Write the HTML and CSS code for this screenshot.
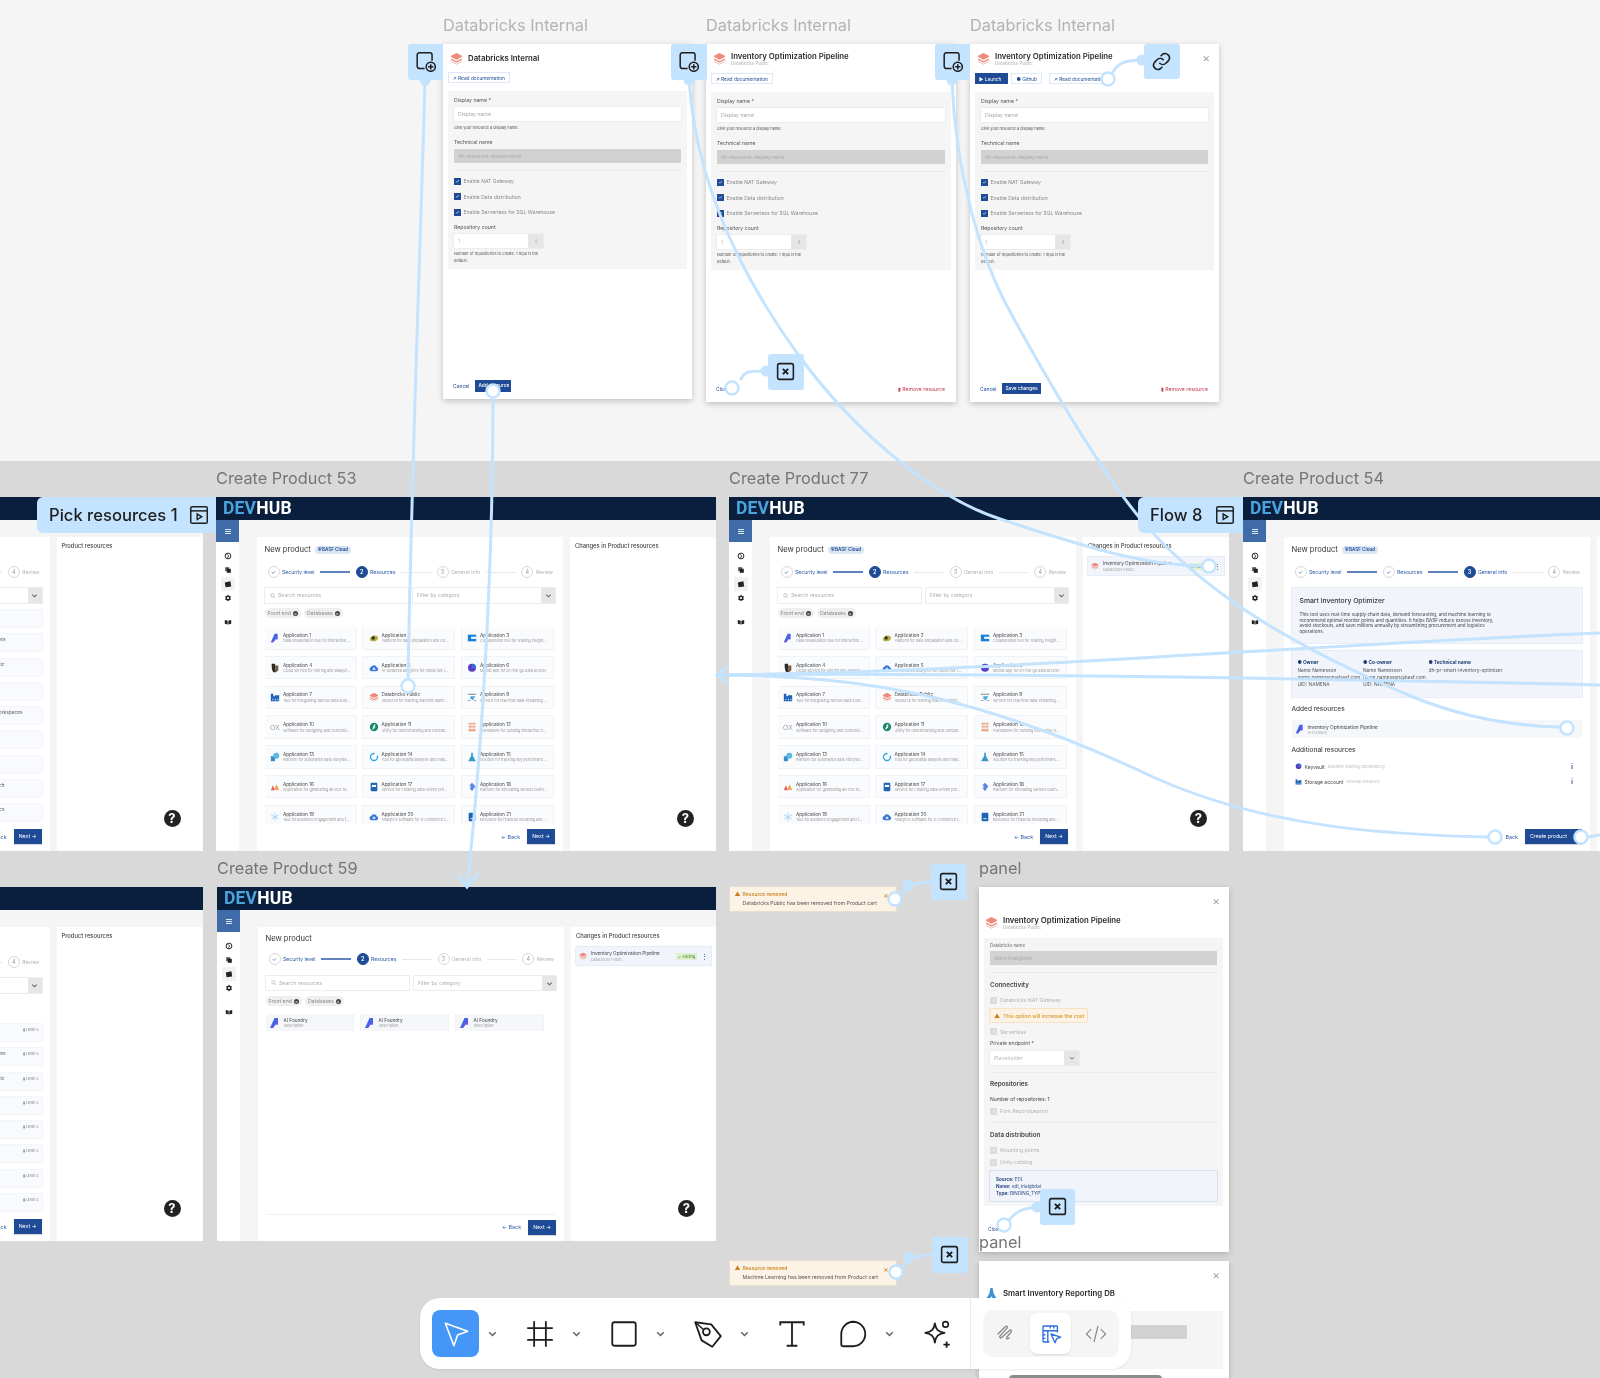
FILE: index.html
```html
<!DOCTYPE html>
<html lang="en">
<head>
<meta charset="utf-8">
<title>Canvas</title>
<link rel="stylesheet" href="styles.css">
</head>
<body>
<svg class="defs" width="0" height="0" aria-hidden="true">
  <defs>
    <symbol id="foundry" viewBox="0 0 12 12"><path d="M1 11 5.500 1H9v6.500H6.500L4 11z" fill="#3f68e6"/><path d="M9 1v6.500H6.500L4 11H1l5-3.500z" fill="#7a4be0" opacity=".8"/></symbol>
    <symbol id="bricks" viewBox="0 0 12 12"><path d="M6 1 11 3.500v1.200L6 7.200 1 4.700V3.500zM1 6l5 2.500L11 6v1.400L6 9.900 1 7.400zM1 8.600l5 2.500 5-2.500v.4L6 11.500 1 9z" fill="#ee8a7c"/></symbol>
    <symbol id="a2" viewBox="0 0 12 12"><path d="M1 8c0-3 3-5 6-5s4 2 4 3-2 4-5 4-5-1-5-2z" fill="#b6b13a"/><circle cx="5" cy="6" r="2" fill="#2f2f2f"/></symbol>
    <symbol id="a3" viewBox="0 0 12 12"><rect x="1" y="2" width="10" height="8" fill="#1a7fd8"/><rect x="5" y="4.500" width="6" height="2.500" fill="#fff"/></symbol>
    <symbol id="a4" viewBox="0 0 12 12"><path d="M2 1h4l1 10H4C2 9 2 5 2 1z" fill="#2d2a26"/><path d="M6 3h4v6l-3 2z" fill="#7a5a3e"/></symbol>
    <symbol id="a5" viewBox="0 0 12 12"><path d="M3 10a2.600 2.600 0 0 1-.4-5.100A3.600 3.600 0 0 1 9.300 5 2.600 2.600 0 0 1 9 10z" fill="#3a78db"/><path d="M4 8.200h4L6 5z" fill="#fff"/></symbol>
    <symbol id="a6" viewBox="0 0 12 12"><circle cx="6" cy="5.600" r="4.800" fill="#5a3fc4"/><path d="M6 1a5 5 0 0 1 5 5H6z" fill="#2f6fd8"/></symbol>
    <symbol id="a7" viewBox="0 0 12 12"><path d="M1 2h3v3h2V4h5v7H1z" fill="#1f63b8"/><path d="M3 8h1v2H3zM6 8h1v2H6zM9 8h1v2H9z" fill="#fff"/></symbol>
    <symbol id="a9" viewBox="0 0 12 12"><path d="M1 2h10v1.400H1zM1 9.500h3v1H1zM8 9.500h3v1H8z" fill="#8a8a8a"/><path d="M4 5h6L7 10 4 8z" fill="#4aa9da"/></symbol>
    <symbol id="a10" viewBox="0 0 12 12"><text x="0" y="9" font-size="8" font-family="Liberation Sans, sans-serif" fill="#9b9b9b">OX</text></symbol>
    <symbol id="a11" viewBox="0 0 12 12"><circle cx="6" cy="6" r="5" fill="#1b8a6b"/><path d="M4 9 6 3h2L6.500 5.500H8L5 9z" fill="#fff"/></symbol>
    <symbol id="a12" viewBox="0 0 12 12"><path d="M2 1h8v2H2zM2 4.500h8v2H2zM2 8h8v3H2z" fill="#ea9a72"/><path d="M4 1.600h4M4 5.200h4M4 9h4" stroke="#fff" stroke-width=".6"/></symbol>
    <symbol id="a13" viewBox="0 0 12 12"><rect x="1" y="5" width="5" height="6" fill="#3a89c9"/><circle cx="7.500" cy="4.500" r="3.600" fill="#5cb8e0"/></symbol>
    <symbol id="a14" viewBox="0 0 12 12"><circle cx="6" cy="6" r="4.200" fill="none" stroke="#2aa6e8" stroke-width="1.600" stroke-dasharray="20 4"/></symbol>
    <symbol id="a15" viewBox="0 0 12 12"><path d="M5 1h2v3.500L10.500 11h-9L5 4.500z" fill="#3898c6"/></symbol>
    <symbol id="a16" viewBox="0 0 12 12"><path d="M1 10 3.500 4 6 10z" fill="#e75a6f"/><path d="M5 9 8 3l3 7z" fill="#f0a03c"/></symbol>
    <symbol id="a17" viewBox="0 0 12 12"><rect x="2" y="1" width="8" height="10" rx="1" fill="#1c66b5"/><rect x="3.500" y="3.500" width="5" height="2.500" fill="#fff"/></symbol>
    <symbol id="a18" viewBox="0 0 12 12"><path d="M6 1 10 5 6 11 3 7 5 6 3 4z" fill="#5a84e6"/></symbol>
    <symbol id="a19" viewBox="0 0 12 12"><path d="M6 1v10M1.500 3.500l9 5M10.500 3.500l-9 5" stroke="#a5d8f2" stroke-width="1.200"/></symbol>
    <symbol id="a21" viewBox="0 0 12 12"><rect x="2" y="1" width="8" height="10" rx="1" fill="#1c66b5"/><path d="M4 8h4" stroke="#fff"/></symbol>
    <symbol id="azure" viewBox="0 0 12 12"><path d="M5 1h2l1 5 3 5H7.500L6 8.500 4.500 11H1l3-5z" fill="#3d93d1"/></symbol>
    <symbol id="side-globe" viewBox="0 0 10 10"><circle cx="5" cy="5" r="3.600" fill="none" stroke="#222" stroke-width="1.200"/><path d="M3 2.500 6 5 4 8" stroke="#222" fill="none"/></symbol>
    <symbol id="side-layers" viewBox="0 0 10 10"><rect x="1.500" y="1.500" width="5" height="5" fill="#555"/><rect x="3.500" y="3.500" width="5" height="5" fill="#222"/></symbol>
    <symbol id="side-box" viewBox="0 0 10 10"><path d="M1 3 8 1.500 9 8 2 9z" fill="#222"/></symbol>
    <symbol id="side-gear" viewBox="0 0 10 10"><circle cx="5" cy="5" r="2.300" fill="none" stroke="#222" stroke-width="1.800"/><path d="M5 1v1.500M5 7.500V9M1.500 3l1.300.8M7.200 6.200 8.500 7M1.500 7l1.300-.8M7.200 3.800 8.500 3" stroke="#222"/></symbol>
    <symbol id="side-book" viewBox="0 0 10 10"><path d="M1 2.500 4.600 3.300V8L1 7.200zM9 2.500 5.400 3.300V8L9 7.200z" fill="#222"/></symbol>
    <symbol id="chev" viewBox="0 0 10 10"><path d="M2.500 4 5 6.500 7.500 4" fill="none" stroke="#666" stroke-width="1.200"/></symbol>
    <symbol id="mag" viewBox="0 0 10 10"><circle cx="4.300" cy="4.300" r="3" fill="none" stroke="#999" stroke-width="1"/><path d="m6.500 6.500 2.500 2.500" stroke="#999" stroke-width="1"/></symbol>
    <symbol id="frame-add" viewBox="0 0 24 24"><path d="M11 20H5a2.500 2.500 0 0 1-2.500-2.500v-13A2.500 2.500 0 0 1 5 2h12a2.500 2.500 0 0 1 2.500 2.500V11" fill="none" stroke="#1e1e1e" stroke-width="1.700"/><circle cx="18" cy="18" r="5.200" fill="none" stroke="#1e1e1e" stroke-width="1.700"/><path d="M18 15v6M15 18h6" stroke="#1e1e1e" stroke-width="1.700"/></symbol>
    <symbol id="box-x" viewBox="0 0 24 24"><rect x="3" y="3" width="18" height="18" rx="2" fill="none" stroke="#1e1e1e" stroke-width="1.800"/><path d="m9 9 6 6m0-6-6 6" stroke="#1e1e1e" stroke-width="2.200"/></symbol>
    <symbol id="flow" viewBox="0 0 24 24"><rect x="3" y="3" width="18" height="18" rx="1.500" fill="none" stroke="#1e1e1e" stroke-width="1.600"/><path d="M3 7.500h18" stroke="#1e1e1e" stroke-width="1.600"/><path d="M10 11v6l5-3z" fill="none" stroke="#1e1e1e" stroke-width="1.500"/></symbol>
  </defs>
</svg>

<div class="canvas">
  <div class="band-top"></div>
  <div class="band-bottom"></div>

  <div class="label label-light l-db1">Databricks Internal</div>
  <div class="label label-light l-db2">Databricks Internal</div>
  <div class="label label-light l-db3">Databricks Internal</div>
  <div class="label l-53">Create Product 53</div>
  <div class="label l-77">Create Product 77</div>
  <div class="label l-54">Create Product 54</div>
  <div class="label l-59">Create Product 59</div>
  <div class="label l-panel1">panel</div>

  <!-- Databricks modals -->
  <section class="modal m1">
    <button class="m-close">×</button>
    <header class="m-head"><svg class="m-logo"><use href="#bricks"/></svg><div><div class="m-title">Databricks Internal</div></div></header>
    <div class="m-actions"><a class="btn-ghost">↗ Read documentation</a></div>
    <div class="m-section">
      <div class="f-label">Display name *</div>
      <div class="input">Display name</div>
      <div class="f-help">Give your resource a display name.</div>
      <div class="f-label mt8">Technical name</div>
      <div class="input disabled">dh-resource-displayname</div>
      <div class="divider"></div>
      <div class="check"><i class="cb">✓</i>Enable NAT Gateway</div>
      <div class="check"><i class="cb">✓</i>Enable Data distribution</div>
      <div class="check"><i class="cb">✓</i>Enable Serverless for SQL Warehouse</div>
      <div class="f-label mt8">Repository count</div>
      <div class="number"><span>1</span><b>⇕</b></div>
      <div class="f-help narrow">Number of repositories to create. 1 repo is the default.</div>
    </div>
    <footer class="m-foot"><a class="link">Cancel</a><a class="btn-primary">Add resource</a></footer>
  </section>

  <section class="modal m2">
    <button class="m-close">×</button>
    <header class="m-head"><svg class="m-logo"><use href="#bricks"/></svg><div><div class="m-title">Inventory Optimization Pipeline</div><div class="m-sub">Databricks Public</div></div></header>
    <div class="m-actions"><a class="btn-ghost">↗ Read documentation</a></div>
    <div class="m-section">
      <div class="f-label">Display name *</div>
      <div class="input">Display name</div>
      <div class="f-help">Give your resource a display name.</div>
      <div class="f-label mt8">Technical name</div>
      <div class="input disabled">dh-resource-displayname</div>
      <div class="divider"></div>
      <div class="check"><i class="cb">✓</i>Enable NAT Gateway</div>
      <div class="check"><i class="cb">✓</i>Enable Data distribution</div>
      <div class="check"><i class="cb">✓</i>Enable Serverless for SQL Warehouse</div>
      <div class="f-label mt8">Repository count</div>
      <div class="number"><span>1</span><b>⇕</b></div>
      <div class="f-help narrow">Number of repositories to create. 1 repo is the default.</div>
    </div>
    <footer class="m-foot"><a class="link">Close</a><a class="remove">▮ Remove resource</a></footer>
  </section>

  <section class="modal m3">
    <button class="m-close">×</button>
    <header class="m-head"><svg class="m-logo"><use href="#bricks"/></svg><div><div class="m-title">Inventory Optimization Pipeline</div><div class="m-sub">Databricks Public</div></div></header>
    <div class="m-actions"><a class="btn-fill">▶ Launch</a><a class="btn-ghost">● Github</a><a class="btn-ghost gap-l">↗ Read documentation</a></div>
    <div class="m-section">
      <div class="f-label">Display name *</div>
      <div class="input">Display name</div>
      <div class="f-help">Give your resource a display name.</div>
      <div class="f-label mt8">Technical name</div>
      <div class="input disabled">dh-resource-displayname</div>
      <div class="divider"></div>
      <div class="check"><i class="cb">✓</i>Enable NAT Gateway</div>
      <div class="check"><i class="cb">✓</i>Enable Data distribution</div>
      <div class="check"><i class="cb">✓</i>Enable Serverless for SQL Warehouse</div>
      <div class="f-label mt8">Repository count</div>
      <div class="number"><span>1</span><b>⇕</b></div>
      <div class="f-help narrow">Number of repositories to create. 1 repo is the default.</div>
    </div>
    <footer class="m-foot"><a class="link">Cancel</a><a class="btn-primary">Save changes</a><a class="remove">▮ Remove resource</a></footer>
  </section>

  <!-- Left clipped frame, row 1 -->
  <section class="product p-left1">
    <div class="topbar"><div class="logo"><span>DEV</span>HUB</div></div>
    <div class="body">
      <nav class="side"><div class="burger"><i></i></div><svg class="si"><use href="#side-globe"/></svg><svg class="si"><use href="#side-layers"/></svg><svg class="si on"><use href="#side-box"/></svg><svg class="si"><use href="#side-gear"/></svg><svg class="si book"><use href="#side-book"/></svg></nav>
      <main class="work">
        <div class="card">
          <div class="c-title">New product</div>
          <div class="stepper"><i class="st done">✓</i><span class="sl on">Security level</span><em class="ln on"></em><i class="st cur">2</i><span class="sl on">Resources</span><em class="ln"></em><i class="st">3</i><span class="sl">General info</span><em class="ln"></em><i class="st">4</i><span class="sl">Review</span></div>
          <div class="filters"><div class="search"><svg><use href="#mag"/></svg>Search resources</div><div class="select">Filter by category<b><svg><use href="#chev"/></svg></b></div></div>
          <div class="rows">
            <div class="row"></div>
            <div class="row r-b">Resources</div>
            <div class="row r-c">Analytic</div>
            <div class="row"></div>
            <div class="row r-a">Workspaces</div>
            <div class="row"></div>
            <div class="row"></div>
            <div class="row r-c">Search</div>
            <div class="row r-c">Analytics</div>
          </div>
          <div class="foot"><a class="back">← Back</a><a class="btn-next">Next →</a></div>
        </div>
        <aside class="changes"><div class="ch-title">Product resources</div><div class="help">?</div></aside>
      </main>
    </div>
  </section>

  <!-- Create Product 53 -->
  <section class="product p-53">
    <div class="topbar"><div class="logo"><span>DEV</span>HUB</div></div>
    <div class="body">
      <nav class="side"><div class="burger"><i></i></div><svg class="si"><use href="#side-globe"/></svg><svg class="si"><use href="#side-layers"/></svg><svg class="si on"><use href="#side-box"/></svg><svg class="si"><use href="#side-gear"/></svg><svg class="si book"><use href="#side-book"/></svg></nav>
      <main class="work">
        <div class="card">
          <div class="c-title">New product <span class="tag">⛨ BASF Cloud</span></div>
          <div class="stepper"><i class="st done">✓</i><span class="sl on">Security level</span><em class="ln on"></em><i class="st cur">2</i><span class="sl on">Resources</span><em class="ln"></em><i class="st">3</i><span class="sl">General info</span><em class="ln"></em><i class="st">4</i><span class="sl">Review</span></div>
          <div class="filters"><div class="search"><svg><use href="#mag"/></svg>Search resources</div><div class="select">Filter by category<b><svg><use href="#chev"/></svg></b></div></div>
          <div class="chips"><span class="chip">Front end <i>×</i></span><span class="chip">Databases <i>×</i></span></div>
          <div class="apps">
            <div class="app"><svg><use href="#foundry"/></svg><div><b>Application 1</b><span>Data visualization tool for interactive data</span></div></div>
            <div class="app"><svg><use href="#a2"/></svg><div><b>Application 2</b><span>Platform for data preparation and cleaning</span></div></div>
            <div class="app"><svg><use href="#a3"/></svg><div><b>Application 3</b><span>Collaboration tool for sharing insights in teams</span></div></div>
            <div class="app"><svg><use href="#a4"/></svg><div><b>Application 4</b><span>Cloud service for storing and analyzing data</span></div></div>
            <div class="app"><svg><use href="#a5"/></svg><div><b>Application 5</b><span>AI-powered analytics for predictive insights</span></div></div>
            <div class="app"><svg><use href="#a6"/></svg><div><b>Application 6</b><span>Mobile app for on-the-go data access</span></div></div>
            <div class="app"><svg><use href="#a7"/></svg><div><b>Application 7</b><span>Tool for integrating various data sources now</span></div></div>
            <div class="app"><svg><use href="#bricks"/></svg><div><b>Databricks Public</b><span>Resource for training machine learning models</span></div></div>
            <div class="app"><svg><use href="#a9"/></svg><div><b>Application 9</b><span>Service for real-time data streaming and more</span></div></div>
            <div class="app"><svg><use href="#a10"/></svg><div><b>Application 10</b><span>Software for designing and customizing things</span></div></div>
            <div class="app"><svg><use href="#a11"/></svg><div><b>Application 11</b><span>Utility for benchmarking and comparing data</span></div></div>
            <div class="app"><svg><use href="#a12"/></svg><div><b>Application 12</b><span>Framework for building interactive data apps</span></div></div>
            <div class="app"><svg><use href="#a13"/></svg><div><b>Application 13</b><span>Platform for automated data storytelling</span></div></div>
            <div class="app"><svg><use href="#a14"/></svg><div><b>Application 14</b><span>Tool for geospatial analysis and mapping data</span></div></div>
            <div class="app"><svg><use href="#a15"/></svg><div><b>Application 15</b><span>Solution for tracking key performance indicators</span></div></div>
            <div class="app"><svg><use href="#a16"/></svg><div><b>Application 16</b><span>Application for generating ad-hoc reports now</span></div></div>
            <div class="app"><svg><use href="#a17"/></svg><div><b>Application 17</b><span>Service for creating data-driven presentations</span></div></div>
            <div class="app"><svg><use href="#a18"/></svg><div><b>Application 18</b><span>Platform for simulating various business cases</span></div></div>
            <div class="app"><svg><use href="#a19"/></svg><div><b>Application 19</b><span>Tool for audience engagement and feedback now</span></div></div>
            <div class="app"><svg><use href="#a5"/></svg><div><b>Application 20</b><span>Analytics software for e-commerce trends today</span></div></div>
            <div class="app"><svg><use href="#a21"/></svg><div><b>Application 21</b><span>Resource for financial modeling and forecasting</span></div></div>
          </div>
          <div class="foot"><a class="back">← Back</a><a class="btn-next">Next →</a></div>
        </div>
        <aside class="changes"><div class="ch-title">Changes in Product resources</div><div class="help">?</div></aside>
      </main>
    </div>
  </section>

  <!-- Create Product 77 -->
  <section class="product p-77">
    <div class="topbar"><div class="logo"><span>DEV</span>HUB</div></div>
    <div class="body">
      <nav class="side"><div class="burger"><i></i></div><svg class="si"><use href="#side-globe"/></svg><svg class="si"><use href="#side-layers"/></svg><svg class="si on"><use href="#side-box"/></svg><svg class="si"><use href="#side-gear"/></svg><svg class="si book"><use href="#side-book"/></svg></nav>
      <main class="work">
        <div class="card">
          <div class="c-title">New product <span class="tag">⛨ BASF Cloud</span></div>
          <div class="stepper"><i class="st done">✓</i><span class="sl on">Security level</span><em class="ln on"></em><i class="st cur">2</i><span class="sl on">Resources</span><em class="ln"></em><i class="st">3</i><span class="sl">General info</span><em class="ln"></em><i class="st">4</i><span class="sl">Review</span></div>
          <div class="filters"><div class="search"><svg><use href="#mag"/></svg>Search resources</div><div class="select">Filter by category<b><svg><use href="#chev"/></svg></b></div></div>
          <div class="chips"><span class="chip">Front end <i>×</i></span><span class="chip">Databases <i>×</i></span></div>
          <div class="apps">
            <div class="app"><svg><use href="#foundry"/></svg><div><b>Application 1</b><span>Data visualization tool for interactive data</span></div></div>
            <div class="app"><svg><use href="#a2"/></svg><div><b>Application 2</b><span>Platform for data preparation and cleaning</span></div></div>
            <div class="app"><svg><use href="#a3"/></svg><div><b>Application 3</b><span>Collaboration tool for sharing insights in teams</span></div></div>
            <div class="app"><svg><use href="#a4"/></svg><div><b>Application 4</b><span>Cloud service for storing and analyzing data</span></div></div>
            <div class="app"><svg><use href="#a5"/></svg><div><b>Application 5</b><span>AI-powered analytics for predictive insights</span></div></div>
            <div class="app"><svg><use href="#a6"/></svg><div><b>Application 6</b><span>Mobile app for on-the-go data access</span></div></div>
            <div class="app"><svg><use href="#a7"/></svg><div><b>Application 7</b><span>Tool for integrating various data sources now</span></div></div>
            <div class="app"><svg><use href="#bricks"/></svg><div><b>Databricks Public</b><span>Resource for training machine learning models</span></div></div>
            <div class="app"><svg><use href="#a9"/></svg><div><b>Application 9</b><span>Service for real-time data streaming and more</span></div></div>
            <div class="app"><svg><use href="#a10"/></svg><div><b>Application 10</b><span>Software for designing and customizing things</span></div></div>
            <div class="app"><svg><use href="#a11"/></svg><div><b>Application 11</b><span>Utility for benchmarking and comparing data</span></div></div>
            <div class="app"><svg><use href="#a12"/></svg><div><b>Application 12</b><span>Framework for building interactive data apps</span></div></div>
            <div class="app"><svg><use href="#a13"/></svg><div><b>Application 13</b><span>Platform for automated data storytelling</span></div></div>
            <div class="app"><svg><use href="#a14"/></svg><div><b>Application 14</b><span>Tool for geospatial analysis and mapping data</span></div></div>
            <div class="app"><svg><use href="#a15"/></svg><div><b>Application 15</b><span>Solution for tracking key performance indicators</span></div></div>
            <div class="app"><svg><use href="#a16"/></svg><div><b>Application 16</b><span>Application for generating ad-hoc reports now</span></div></div>
            <div class="app"><svg><use href="#a17"/></svg><div><b>Application 17</b><span>Service for creating data-driven presentations</span></div></div>
            <div class="app"><svg><use href="#a18"/></svg><div><b>Application 18</b><span>Platform for simulating various business cases</span></div></div>
            <div class="app"><svg><use href="#a19"/></svg><div><b>Application 19</b><span>Tool for audience engagement and feedback now</span></div></div>
            <div class="app"><svg><use href="#a5"/></svg><div><b>Application 20</b><span>Analytics software for e-commerce trends today</span></div></div>
            <div class="app"><svg><use href="#a21"/></svg><div><b>Application 21</b><span>Resource for financial modeling and forecasting</span></div></div>
          </div>
          <div class="foot"><a class="back">← Back</a><a class="btn-next">Next →</a></div>
        </div>
        <aside class="changes"><div class="ch-title">Changes in Product resources</div>
          <div class="ch-item"><svg><use href="#bricks"/></svg><div><b>Inventory Optimization Pipeline</b><span>Databricks Public</span></div><em class="adding">✓ Adding</em><i class="kebab">⋮</i></div>
          <div class="help">?</div></aside>
      </main>
    </div>
  </section>

  <!-- Create Product 54 -->
  <section class="product p-54">
    <div class="topbar"><div class="logo"><span>DEV</span>HUB</div></div>
    <div class="body">
      <nav class="side"><div class="burger"><i></i></div><svg class="si"><use href="#side-globe"/></svg><svg class="si"><use href="#side-layers"/></svg><svg class="si on"><use href="#side-box"/></svg><svg class="si"><use href="#side-gear"/></svg><svg class="si book"><use href="#side-book"/></svg></nav>
      <main class="work">
        <div class="card">
          <div class="c-title">New product <span class="tag">⛨ BASF Cloud</span></div>
          <div class="stepper"><i class="st done">✓</i><span class="sl on">Security level</span><em class="ln on"></em><i class="st done">✓</i><span class="sl on">Resources</span><em class="ln on"></em><i class="st cur">3</i><span class="sl on">General info</span><em class="ln"></em><i class="st">4</i><span class="sl">Review</span></div>
          <div class="summary">
            <h3>Smart Inventory Optimizer</h3>
            <p>This tool uses real-time supply chain data, demand forecasting, and machine learning to recommend optimal reorder points and quantities. It helps BASF reduce excess inventory, avoid stockouts, and save millions annually by streamlining procurement and logistics operations.</p>
          </div>
          <div class="owners">
            <div class="col"><b>Owner</b><span>Name Namesson</span><span>name.namesson@basf.com</span><span>UID: NAMENA</span></div>
            <div class="col"><b>Co-owner</b><span>Name Namesson</span><span>name.namesson@basf.com</span><span>UID: NAMENA</span></div>
            <div class="col"><b>Technical name</b><span>dh-pr-smart-inventory-optimizer</span></div>
          </div>
          <div class="sec-title">Added resources</div>
          <div class="added"><svg><use href="#foundry"/></svg><div><b>Inventory Optimization Pipeline</b><span>AI Foundry</span></div></div>
          <div class="sec-title second">Additional resources</div>
          <div class="extra"><svg><use href="#a6"/></svg><b>Keyvault</b><span>Machine learning dependency</span><i>i</i></div>
          <div class="extra"><svg><use href="#a7"/></svg><b>Storage account</b><span>DevHub resource</span><i>i</i></div>
          <div class="foot"><a class="back">Back</a><a class="btn-next">Create product</a></div>
        </div>
        <aside class="changes"></aside>
      </main>
    </div>
  </section>

  <!-- Left clipped frame, row 2 -->
  <section class="product p-left2">
    <div class="topbar"><div class="logo"><span>DEV</span>HUB</div></div>
    <div class="body">
      <nav class="side"><div class="burger"><i></i></div></nav>
      <main class="work">
        <div class="card">
          <div class="c-title">New product</div>
          <div class="stepper"><i class="st done">✓</i><span class="sl on">Security level</span><em class="ln on"></em><i class="st cur">2</i><span class="sl on">Resources</span><em class="ln"></em><i class="st">3</i><span class="sl">General info</span><em class="ln"></em><i class="st">4</i><span class="sl">Review</span></div>
          <div class="filters"><div class="search"><svg><use href="#mag"/></svg>Search resources</div><div class="select">Filter by category<b><svg><use href="#chev"/></svg></b></div></div>
          <div class="rows shifted">
            <div class="row"><em>▮ Level 5</em></div>
            <div class="row r-b">Resources<em>▮ Level 5</em></div>
            <div class="row r-c">Analytic<em>▮ Level 5</em></div>
            <div class="row"><em>▮ Level 5</em></div>
            <div class="row"><em>▮ Level 5</em></div>
            <div class="row"><em>▮ Level 5</em></div>
            <div class="row"><em>▮ Level 5</em></div>
            <div class="row"><em>▮ Level 5</em></div>
          </div>
          <div class="foot"><a class="back">← Back</a><a class="btn-next">Next →</a></div>
        </div>
        <aside class="changes"><div class="ch-title">Product resources</div><div class="help">?</div></aside>
      </main>
    </div>
  </section>

  <!-- Create Product 59 -->
  <section class="product p-59 compact">
    <div class="topbar"><div class="logo"><span>DEV</span>HUB</div></div>
    <div class="body">
      <nav class="side"><div class="burger"><i></i></div><svg class="si"><use href="#side-globe"/></svg><svg class="si"><use href="#side-layers"/></svg><svg class="si on"><use href="#side-box"/></svg><svg class="si"><use href="#side-gear"/></svg><svg class="si book"><use href="#side-book"/></svg></nav>
      <main class="work">
        <div class="card">
          <div class="c-title">New product</div>
          <div class="stepper"><i class="st done">✓</i><span class="sl on">Security level</span><em class="ln on"></em><i class="st cur">2</i><span class="sl on">Resources</span><em class="ln"></em><i class="st">3</i><span class="sl">General info</span><em class="ln"></em><i class="st">4</i><span class="sl">Review</span></div>
          <div class="filters"><div class="search"><svg><use href="#mag"/></svg>Search resources</div><div class="select">Filter by category<b><svg><use href="#chev"/></svg></b></div></div>
          <div class="chips"><span class="chip">Front end <i>×</i></span><span class="chip">Databases <i>×</i></span></div>
          <div class="apps three">
            <div class="app"><svg><use href="#foundry"/></svg><div><b>AI Foundry</b><span>Description</span></div></div>
            <div class="app"><svg><use href="#foundry"/></svg><div><b>AI Foundry</b><span>Description</span></div></div>
            <div class="app"><svg><use href="#foundry"/></svg><div><b>AI Foundry</b><span>Description</span></div></div>
          </div>
          <div class="foot lined"><a class="back">← Back</a><a class="btn-next">Next →</a></div>
        </div>
        <aside class="changes"><div class="ch-title">Changes in Product resources</div>
          <div class="ch-item"><svg><use href="#bricks"/></svg><div><b>Inventory Optimization Pipeline</b><span>Databricks Public</span></div><em class="adding">✓ Adding</em><i class="kebab">⋮</i></div>
          <div class="help">?</div></aside>
      </main>
    </div>
  </section>

  <!-- Toasts -->
  <div class="toast t1"><i class="warn">▲</i><div><b>Resource removed</b><span>Databricks Public has been removed from Product cart</span></div><u>×</u></div>
  <div class="toast t2"><i class="warn">▲</i><div><b>Resource removed</b><span>Machine Learning has been removed from Product cart</span></div><u>×</u></div>

  <!-- Side panels -->
  <section class="panel pn1">
    <button class="m-close">×</button>
    <header class="pn-head"><svg class="m-logo"><use href="#bricks"/></svg><div><div class="m-title">Inventory Optimization Pipeline</div><div class="m-sub">Databricks Public</div></div></header>
    <div class="pn-section">
      <div class="tiny">Databricks name</div>
      <div class="input disabled">dbks-trialgbdat</div>
      <div class="divider"></div>
      <div class="h6">Connectivity</div>
      <div class="gcheck"><i>✓</i>Databricks NAT Gateway</div>
      <div class="warnbox"><i class="warn">▲</i>This option will increase the cost</div>
      <div class="gcheck tight"><i>✓</i>Serverless</div>
      <div class="f-label mt4">Private endpoint *</div>
      <div class="number sel"><span>Placeholder</span><b><svg><use href="#chev"/></svg></b></div>
      <div class="divider"></div>
      <div class="h6">Repositories</div>
      <div class="tiny strong">Number of repositories: 1</div>
      <div class="gcheck tight"><i>✓</i>Fork Repo blueprint</div>
      <div class="divider"></div>
      <div class="h6">Data distribution</div>
      <div class="gcheck"><i>✓</i>Mounting points</div>
      <div class="gcheck close"><i>✓</i>Unity catalog</div>
      <div class="infobox"><div><b>Source:</b> EDL</div><div><b>Name:</b> edl_trialgbdat</div><div><b>Type:</b> BINDING_TYPE</div></div>
    </div>
    <footer class="pn-foot"><a class="link">Close</a></footer>
  </section>

  <section class="panel pn2">
    <button class="m-close">×</button>
    <header class="pn-head"><svg class="m-logo"><use href="#azure"/></svg><div><div class="m-title">Smart Inventory Reporting DB</div></div></header>
    <div class="pn-section short">
      <div class="tiny">Databricks name</div>
      <div class="input disabled shortinput">dbks-trialgbdat</div>
    </div>
    <div class="scrollbar"></div>
  </section>
  <div class="label l-panel2">panel</div>

  <!-- Prototype connectors -->
  <svg class="wires" viewBox="0 0 1600 1378" width="1600" height="1378" aria-hidden="true">
    <g fill="none" stroke="#c4e3fe" stroke-width="3" stroke-linecap="round">
      <path d="M425 80C422 200 412 450 408 680"/>
      <path d="M493 398C493 600 478 790 467 886M458 875 467 887 477 875"/>
      <path d="M689 80C695 170 730 260 797 353C860 440 940 500 1003 520C1080 545 1140 565 1203 566"/>
      <path d="M952 80C955 170 980 260 1013 317C1045 375 1105 480 1150 530C1210 595 1290 645 1413 697C1460 716 1510 726 1560 727"/>
      <path d="M717 675C900 672 1300 678 1600 685"/>
      <path d="M717 675C1000 672 1300 645 1600 633"/>
      <path d="M717 675C860 675 980 695 1153 777C1270 830 1400 835 1488 837"/>
      <path d="M1588 837 1600 835"/>
      <path d="M727 667 717 675 727 683"/>
      <path d="M768 371C745 371 745 372 741 379"/>
      <path d="M1144 60C1125 60 1118 63 1113 72"/>
      <path d="M931 882C915 882 912 885 902 893"/>
      <path d="M932 1255C916 1255 913 1258 903 1266"/>
      <path d="M1039 1207C1022 1208 1016 1212 1010 1219"/>
    </g>
    <g fill="#c4e3fe">
      <circle cx="425" cy="80" r="5.500"/><circle cx="689" cy="80" r="5.500"/><circle cx="952" cy="80" r="5.500"/>
      <circle cx="1142" cy="60" r="5.500"/><circle cx="766" cy="371" r="5.500"/>
      <circle cx="908" cy="885" r="5.500"/><circle cx="909" cy="1257" r="5.500"/><circle cx="1037" cy="1207" r="5.500"/>
    </g>
    <g fill="#fff" stroke="#c4e3fe" stroke-width="2.500">
      <circle cx="408" cy="686" r="6.500"/><circle cx="493" cy="391" r="6.500"/><circle cx="732" cy="388" r="6.500"/>
      <circle cx="1108" cy="79" r="6.500"/><circle cx="1209" cy="566" r="6.500"/><circle cx="1567" cy="728" r="6.500"/>
      <circle cx="1495" cy="837" r="6.500"/><circle cx="1581" cy="837" r="6.500"/>
      <circle cx="895" cy="899" r="6.500"/><circle cx="896" cy="1272" r="6.500"/><circle cx="1004" cy="1225" r="6.500"/>
    </g>
  </svg>

  <!-- Connector handles -->
  <div class="node n-a"><svg><use href="#frame-add"/></svg></div>
  <div class="node n-b"><svg><use href="#frame-add"/></svg></div>
  <div class="node n-c"><svg><use href="#frame-add"/></svg></div>
  <div class="node n-link"><svg viewBox="0 0 24 24"><path d="M10 14a5 5 0 0 0 7 0l3-3a5 5 0 0 0-7-7l-1.500 1.500M14 10a5 5 0 0 0-7 0l-3 3a5 5 0 0 0 7 7l1.500-1.500" fill="none" stroke="#1e1e1e" stroke-width="1.800" stroke-linecap="round"/></svg></div>
  <div class="node n-x1"><svg><use href="#box-x"/></svg></div>
  <div class="node n-x2"><svg><use href="#box-x"/></svg></div>
  <div class="node n-x3"><svg><use href="#box-x"/></svg></div>
  <div class="node n-x4"><svg><use href="#box-x"/></svg></div>
  <div class="flowtag f-pick">Pick resources 1<svg><use href="#flow"/></svg></div>
  <div class="flowtag f-8">Flow 8<svg><use href="#flow"/></svg></div>

  <!-- Toolbar -->
  <div class="toolbar">
    <div class="tools">
      <button class="tool move"><svg viewBox="0 0 30 30"><path d="M5 5 26 12.500 16.500 16 13 26z" fill="none" stroke="#fff" stroke-width="1.500" stroke-linejoin="round"/></svg></button>
      <svg class="mini"><use href="#chev"/></svg>
      <button class="tool"><svg viewBox="0 0 30 30"><path d="M9.500 3v24M20.500 3v24M3 9.500h24M3 20.500h24" stroke="#1e1e1e" stroke-width="1.700"/></svg></button>
      <svg class="mini"><use href="#chev"/></svg>
      <button class="tool"><svg viewBox="0 0 30 30"><rect x="4" y="4" width="22" height="22" rx="2" fill="none" stroke="#1e1e1e" stroke-width="1.700"/></svg></button>
      <svg class="mini"><use href="#chev"/></svg>
      <button class="tool"><svg viewBox="0 0 30 30"><path d="M3 4 18 6 27 17 19 27 9 21z" fill="none" stroke="#1e1e1e" stroke-width="1.700" stroke-linejoin="round"/><circle cx="13.500" cy="13" r="3.200" fill="none" stroke="#1e1e1e" stroke-width="1.700"/><path d="m3 4 8 7" stroke="#1e1e1e" stroke-width="1.500"/></svg></button>
      <svg class="mini"><use href="#chev"/></svg>
      <button class="tool"><svg viewBox="0 0 30 30"><path d="M4 7V4h22v3M15 4v22M10 26h10" fill="none" stroke="#1e1e1e" stroke-width="1.700"/></svg></button>
      <button class="tool"><svg viewBox="0 0 30 30"><path d="M15 3.500a11.500 11.500 0 0 1 0 23H6a2 2 0 0 1-2-2V15A11.500 11.500 0 0 1 15 3.500z" fill="none" stroke="#1e1e1e" stroke-width="1.700"/></svg></button>
      <svg class="mini"><use href="#chev"/></svg>
      <button class="tool"><svg viewBox="0 0 30 30"><path d="M13 5c1 6 3 8 9 9-6 1-8 3-9 9-1-6-3-8-9-9 6-1 8-3 9-9z" fill="none" stroke="#1e1e1e" stroke-width="1.700" stroke-linejoin="round"/><circle cx="23" cy="6" r="2.600" fill="none" stroke="#1e1e1e" stroke-width="1.500"/><path d="M24 22v6M21 25h6" stroke="#1e1e1e" stroke-width="1.700"/></svg></button>
    </div>
    <div class="modes">
      <button class="mode"><svg viewBox="0 0 30 30"><path d="M5 15 14 6c2-2 4 0 2 2l-8 9c-2 2 0 4 2 2l9-8c2-2 4 0 2 2l-5 6c-1 2 1 3 3 1" fill="none" stroke="#8a8a8a" stroke-width="1.700" stroke-linecap="round"/></svg></button>
      <button class="mode active"><svg viewBox="0 0 30 30"><path d="M13 25H6a1 1 0 0 1-1-1V6a1 1 0 0 1 1-1h16a1 1 0 0 1 1 1v7M5 11h18M11 11v14M14 5v3M18.500 5v3M5 16h3M5 20.500h3" fill="none" stroke="#2f6fdf" stroke-width="1.700"/><path d="M15 15 27 19 22 21 20 26z" fill="none" stroke="#2f6fdf" stroke-width="1.700" stroke-linejoin="round"/></svg></button>
      <button class="mode"><svg viewBox="0 0 30 30"><path d="M9 9 3 15l6 6M21 9l6 6-6 6M17.500 5l-5 20" fill="none" stroke="#8a8a8a" stroke-width="1.500"/></svg></button>
    </div>
  </div>
</div>
</body>
</html>
```

FILE: styles.css
```css
* { box-sizing: border-box; }
html, body { margin: 0; width: 1600px; height: 1378px; overflow: hidden; }
body { font-family: Inter, "Liberation Sans", sans-serif; color: #333; background: #d9d9d9; }
button { border: 0; background: none; padding: 0; font: inherit; }
.defs { position: absolute; }

.canvas { position: relative; width: 1600px; height: 1378px; overflow: hidden; display: flex; flex-direction: column; filter: blur(.35px); }
.band-top { height: 461px; background: #f5f5f5; flex: none; }
.band-bottom { flex: 1; background: #d9d9d9; }

/* Frame labels: free canvas */
.label { position: absolute; font-size: 16.300px; line-height: 20px; color: #757575; white-space: nowrap; }
.label-light { color: #b3b3b3; }
.l-db1 { left: 443px; top: 15px; }
.l-db2 { left: 706px; top: 15px; }
.l-db3 { left: 970px; top: 15px; }
.l-53 { left: 216px; top: 468px; }
.l-77 { left: 729px; top: 468px; }
.l-54 { left: 1243px; top: 468px; }
.l-59 { left: 217px; top: 858px; }
.l-panel1 { left: 979px; top: 858px; }
.l-panel2 { left: 979px; top: 1232px; }

/* Modals */
.modal { position: absolute; top: 44px; width: 249px; background: #fff; box-shadow: 0 2px 6px rgba(0,0,0,.22); display: flex; flex-direction: column; padding: 0 5px; }
.m1 { left: 443px; height: 355px; }
.m2 { left: 706px; height: 358px; width: 250px; }
.m3 { left: 970px; height: 358px; }
.m-close { position: absolute; right: 9px; top: 7px; font-size: 12px; line-height: 14px; color: #8a8a8a; font-weight: 300; }
.m-head { height: 28px; display: flex; align-items: center; gap: 5px; padding-left: 2px; }
.m2 .m-head, .m3 .m-head { height: 29px; }
.m-logo { width: 13px; height: 13px; flex: none; }
.m-title { font-size: 7.800px; line-height: 10px; font-weight: 600; color: #2b2b2b; white-space: nowrap; }
.m-sub { font-size: 4.600px; line-height: 6px; color: #b0b0b0; white-space: nowrap; }
.m-actions { height: 11px; display: flex; gap: 3px; }
.btn-ghost { display: flex; align-items: center; padding: 0 4px; background: #fff; border: 1px solid #dfe8f4; font-size: 4.800px; color: #1f4b99; white-space: nowrap; }
.btn-fill { display: flex; align-items: center; padding: 0 7px 0 4px; background: #1e4a96; font-size: 4.800px; color: #fff; white-space: nowrap; }
.gap-l { margin-left: 4px; }
.m-section { margin-top: 8px; background: #f5f5f5; padding: 6px 6px 5px; height: 178px; }
.f-label { font-size: 5.200px; line-height: 7px; color: #555; white-space: nowrap; }
.mt8 { margin-top: 8px; }
.mt4 { margin-top: 4.500px; }
.input { margin-top: 3px; height: 14px; background: #fff; box-shadow: 0 0 0 .5px #e4e4e4; font-size: 5.200px; line-height: 14px; padding-left: 4px; color: #a8a8a8; white-space: nowrap; }
.input.disabled { background: #d2d2d2; box-shadow: none; color: #ababab; }
.f-help { margin-top: 2.500px; font-size: 3.900px; line-height: 7px; color: #555; }
.f-help.narrow { width: 92px; }
.divider { height: 1px; background: #ebebeb; margin-top: 7.500px; }
.check { display: flex; align-items: center; gap: 2.500px; height: 8px; margin-top: 7.500px; font-size: 5.100px; color: #8a8a8a; white-space: nowrap; }
.divider + .check { margin-top: 6px; }
.cb { width: 7px; height: 7px; background: #1e4a96; color: #fff; font-style: normal; font-size: 5px; line-height: 7px; text-align: center; flex: none; }
.number { margin-top: 2.500px; width: 89px; height: 14px; display: flex; background: #fff; font-size: 5.200px; line-height: 14px; color: #bbb; box-shadow: 0 0 0 .5px #e4e4e4; }
.number span { flex: 1; padding-left: 4px; }
.number b { width: 15px; background: #e6e6e6; text-align: center; font-weight: 400; color: #aaa; }
.m-foot { margin-top: auto; padding: 0 6px 7px 5px; display: flex; align-items: center; gap: 6px; height: 19px; font-size: 5px; }
.m3 .m-foot, .m2 .m-foot { padding-bottom: 8px; }
.link { color: #1f4b99; font-size: 5px; }
.btn-primary { background: #1e4a96; color: #fff; padding: 0 3px; height: 11.500px; line-height: 11.500px; font-size: 4.800px; font-weight: 500; white-space: nowrap; }
.m1 .btn-primary { width: 36px; text-align: center; }
.remove { margin-left: auto; color: #c23a4e; font-size: 5.200px; white-space: nowrap; }

/* Product frames */
.product { position: absolute; width: 500px; height: 354px; background: #f5f5f5; overflow: hidden; display: flex; flex-direction: column; }
.p-left1 { left: -297.500px; top: 497px; }
.p-53 { left: 216px; top: 497px; }
.p-77 { left: 729px; top: 497px; }
.p-54 { left: 1243px; top: 497px; }
.p-left2 { left: -297.500px; top: 887px; }
.p-59 { left: 217px; top: 887px; width: 499px; }
.topbar { height: 23px; flex: none; background: #0a1f3e; padding-left: 7px; }
.logo { font-family: Roboto, "Liberation Sans", sans-serif; font-weight: 700; font-size: 17.500px; line-height: 23px; color: #fff; letter-spacing: .2px; }
.logo span { color: #4aa3dc; }
.body { flex: 1; display: flex; min-height: 0; }
.side { width: 23px; flex: none; background: #fff; display: flex; flex-direction: column; align-items: center; }
.burger { width: 23px; height: 22px; background: #3f6ba9; display: flex; align-items: center; justify-content: center; flex: none; margin-bottom: 10px; }
.burger i { width: 6px; height: 5px; background: repeating-linear-gradient(#dfe8f4 0 1px, transparent 1px 2px); }
.si { width: 8px; height: 8px; margin-bottom: 6px; flex: none; }
.si.on { outline: 3px solid #f2f2f2; background: #f2f2f2; }
.si.book { margin-top: 10px; }
.work { flex: 1; display: flex; padding: 17px 0 0 18px; gap: 7px; min-width: 0; }
.card { width: 306px; flex: none; background: #fff; padding: 8px 8px 7px 7.500px; display: flex; flex-direction: column; overflow: hidden; }
.c-title { font-size: 7.600px; line-height: 10px; color: #333; display: flex; align-items: center; gap: 4px; white-space: nowrap; }
.tag { font-size: 4.600px; height: 8px; line-height: 8px; padding: 0 3px; border-radius: 4px; background: #dbe6f3; color: #1f4b99; font-weight: 600; }
.stepper { display: flex; align-items: center; gap: 2.500px; height: 12px; margin-top: 11px; padding-left: 3px; margin-right: 2px; }
.st { width: 12px; height: 12px; border-radius: 50%; border: .8px solid #d8d8d8; font-style: normal; font-size: 5.500px; line-height: 10.500px; text-align: center; color: #999; flex: none; background: #fff; }
.st.done { color: #1e4a96; }
.st.cur { background: #1e4a96; border-color: #1e4a96; color: #fff; font-weight: 600; }
.sl { font-size: 5.100px; color: #b5b5b5; white-space: nowrap; }
.sl.on { color: #2a5aa8; }
.ln { flex: 1; height: 1px; background: #e8e8e8; margin: 0 3px; }
.ln.on { background: #5f83be; height: 1.200px; }
.filters { display: flex; gap: 5px; margin-top: 10px; height: 15px; padding-right: 0; }
.search, .select { flex: 1; background: #fff; box-shadow: 0 0 0 .7px #e6e6e6; font-size: 5.200px; line-height: 15px; padding-left: 4px; color: #b0b0b0; white-space: nowrap; position: relative; }
.search { display: flex; align-items: center; gap: 3px; padding-left: 5px; }
.search svg { width: 5.500px; height: 5.500px; flex: none; }
.select b { position: absolute; right: 0; top: 0; width: 14px; height: 15px; background: #e6e6e6; display: flex; align-items: center; justify-content: center; }
.select b svg { width: 9px; height: 9px; }
.chips { display: flex; gap: 3px; margin-top: 5px; height: 10px; }
.chip { background: #efefef; border-radius: 5px; padding: 0 3px; font-size: 5.200px; line-height: 10px; color: #8a8a8a; white-space: nowrap; display: flex; gap: 2px; align-items: center; }
.chip i { width: 5px; height: 5px; border-radius: 50%; background: #444; color: #fff; font-style: normal; font-size: 4.500px; line-height: 5px; text-align: center; }
.apps { margin-top: 9px; height: 197px; flex: none; overflow: hidden; display: grid; grid-template-columns: repeat(3, 91px); grid-auto-rows: 21.500px; gap: 8.300px 7.500px; }
.app { display: flex; align-items: center; gap: 3px; padding: 0 5px 0 5.500px; background: #fafbfd; box-shadow: 0 0 0 .7px #e9eef6; min-width: 0; }
.app svg { width: 10px; height: 10px; flex: none; }
.app div { min-width: 0; display: flex; flex-direction: column; }
.app b { font-size: 4.700px; line-height: 6.500px; font-weight: 400; color: #444; white-space: nowrap; }
.app span { font-size: 3.700px; line-height: 5.500px; color: #9a9a9a; white-space: nowrap; overflow: hidden; text-overflow: ellipsis; }
.foot { margin-top: auto; height: 20px; padding-top: 5px; display: flex; justify-content: flex-end; align-items: center; gap: 7px; flex: none; }
.back { color: #2a5aa8; font-size: 5.400px; white-space: nowrap; }
.btn-next { height: 15px; padding: 0 5px; line-height: 15px; background: #1e4a96; color: #fff; font-size: 5.200px; white-space: nowrap; box-shadow: 0 1px 1px rgba(0,0,0,.15); }
.changes { flex: 1; background: #fff; padding: 5px; position: relative; min-width: 0; }
.ch-title { font-size: 5.800px; line-height: 8px; font-weight: 500; color: #444; white-space: nowrap; }
.ch-item { margin-top: 7px; height: 18px; display: flex; align-items: center; gap: 4px; padding: 0 3px; background: #f1f5fb; box-shadow: 0 0 0 .7px #dce6f3; }
.ch-item svg { width: 8px; height: 8px; flex: none; }
.ch-item div { flex: 1; min-width: 0; display: flex; flex-direction: column; }
.ch-item b { font-size: 4.700px; line-height: 6.500px; font-weight: 400; color: #444; white-space: nowrap; }
.ch-item span { font-size: 3.800px; line-height: 5px; color: #aaa; }
.adding { font-style: normal; background: #dff0d0; color: #4a8a2a; font-size: 3.800px; line-height: 7px; padding: 0 2px; white-space: nowrap; }
.kebab { font-style: normal; color: #1e4a96; font-size: 7px; }
.help { position: absolute; left: 107px; top: 273px; width: 17px; height: 17px; border-radius: 50%; background: #222; color: #fff; font-weight: 700; font-size: 13px; line-height: 17px; text-align: center; }

/* Left frame rows */
.rows { margin-top: 7px; display: flex; flex-direction: column; gap: 7.300px; }
.rows.shifted { margin-top: 31px; }
.row { height: 17px; background: #f8fafd; box-shadow: 0 0 0 .7px #edf1f7; font-size: 4.800px; line-height: 11px; text-align: right; color: #555; position: relative; }
.row em { position: absolute; right: 3px; top: 0; font-style: normal; font-size: 3.800px; color: #8a8a8a; }
.r-a { padding-right: 19px; }
.r-b { padding-right: 36px; }
.r-c { padding-right: 37px; }
.rows.shifted .row { text-align: right; }

/* Product 54 */
.summary { margin-top: 10px; height: 55px; background: #f1f5fb; box-shadow: 0 0 0 .7px #dce6f3; padding: 8px 8px; margin-right: 0; }
.summary h3 { margin: 0; font-size: 6.800px; line-height: 9px; font-weight: 500; color: #333; }
.summary p { margin: 7px 0 0; width: 196px; font-size: 4.600px; line-height: 5.700px; color: #444; }
.owners { margin-top: 8px; height: 46px; background: #f1f5fb; box-shadow: 0 0 0 .7px #dce6f3; display: flex; padding: 7px 6px; }
.col { width: 65.500px; display: flex; flex-direction: column; font-size: 4.800px; line-height: 7px; color: #555; white-space: nowrap; overflow: hidden; }
.col:last-child { width: 120px; }
.col b { color: #1e3a6e; font-weight: 700; line-height: 9px; }
.col b::before { content: "●"; margin-right: 1px; }
.sec-title { margin-top: 8px; font-size: 6.500px; line-height: 8px; font-weight: 500; color: #444; }
.sec-title.second { margin-top: 8px; }
.added { margin-top: 7px; height: 18px; background: #f5f7fb; display: flex; align-items: center; gap: 3px; padding: 0 3px; }
.added svg { width: 10px; height: 10px; flex: none; }
.added div { display: flex; flex-direction: column; }
.added b { font-size: 4.800px; line-height: 6px; font-weight: 400; color: #444; }
.added span { font-size: 3.800px; line-height: 5px; color: #aaa; }
.extra { margin-top: 6px; height: 9px; display: flex; align-items: center; gap: 3px; padding: 0 3px; font-size: 5px; }
.sec-title + .extra { margin-top: 8px; }
.extra svg { width: 7px; height: 7px; flex: none; }
.extra b { font-weight: 400; color: #444; }
.extra span { font-size: 4px; color: #bbb; }
.extra i { margin-left: auto; margin-right: 6px; font-style: normal; font-weight: 700; color: #1e4a96; font-size: 6px; }
.p-54 .btn-next { width: 57px; padding: 0 5px; }
.p-54 .back { margin-right: 0; }

/* Product 59 compact spacing */
.compact .card { padding-top: 7px; }
.compact .stepper { margin-top: 9px; }
.compact .filters { margin-top: 11px; height: 14px; }
.compact .search, .compact .select { line-height: 14px; }
.compact .chips { margin-top: 6px; }
.compact .apps.three { margin-top: 8px; height: auto; grid-template-columns: repeat(3, 87px); grid-auto-rows: 17px; gap: 8px 8px; background: none; }
.three .app { padding: 0 3px; background: #f5f7fb; }
.three .app svg { width: 12px; height: 12px; }
.foot.lined { border-top: 1px solid #f0f0f0; }

/* Toasts */
.toast { position: absolute; left: 729.500px; width: 166px; height: 24px; background: #fcf3e5; box-shadow: 0 0 0 .5px #f5e5cb; display: flex; gap: 2px; padding: 4px 5px; }
.t1 { top: 887px; }
.t2 { top: 1261px; }
.toast div { display: flex; flex-direction: column; gap: 3px; white-space: nowrap; }
.toast b { font-size: 5px; line-height: 6px; font-weight: 500; color: #c87f1a; }
.toast span { font-size: 5.200px; line-height: 6px; color: #555; }
.toast u { position: absolute; right: 7px; top: 4px; text-decoration: none; font-size: 8px; line-height: 8px; color: #c87f1a; }
.warn { font-style: normal; font-size: 6px; line-height: 6px; color: #c87f1a; }

/* Side panels */
.panel { position: absolute; left: 979px; width: 250px; background: #fff; padding: 0 6px 0 5px; box-shadow: 0 2px 6px rgba(0,0,0,.2); }
.pn1 { top: 887px; height: 365px; }
.pn2 { top: 1261px; height: 130px; }
.panel .m-close { top: 7px; right: 9px; }
.pn-head { height: 51px; display: flex; align-items: center; gap: 5px; padding-left: 1px; padding-top: 20px; }
.pn2 .pn-head { height: 50px; padding-top: 14px; }
.pn-section { background: #f5f5f5; height: 267.500px; padding: 5px 6px; }
.pn-section.short { height: 57.500px; }
.tiny { font-size: 4.400px; line-height: 6px; color: #666; white-space: nowrap; }
.tiny.strong { margin-top: 7.500px; font-size: 5px; color: #444; }
.pn-section .input { margin-top: 2px; }
.pn-section .divider { margin-top: 7px; }
.shortinput { width: 197px; }
.pn-section.short .input { margin-top: 3px; }
.h6 { margin-top: 7.500px; font-size: 6.300px; line-height: 8px; font-weight: 600; color: #444; }
.gcheck { display: flex; align-items: center; gap: 3px; height: 8px; margin-top: 7.500px; font-size: 5.200px; color: #b5b5b5; white-space: nowrap; }
.gcheck i { width: 7px; height: 7px; background: #dcdcdc; color: #f5f5f5; font-style: normal; font-size: 5px; line-height: 7px; text-align: center; }
.gcheck.tight { margin-top: 5.500px; }
.gcheck.close { margin-top: 4px; }
.warnbox { margin-top: 5px; width: 97px; height: 13px; background: #fcf3e5; box-shadow: 0 0 0 .6px #f3d9a6; display: flex; align-items: center; gap: 3px; padding-left: 4px; font-size: 5.200px; font-weight: 500; color: #d8962a; white-space: nowrap; }
.number.sel { margin-top: 3.500px; }
.number.sel b { display: flex; align-items: center; justify-content: center; }
.number.sel b svg { width: 8px; height: 8px; }
.infobox { margin-top: 5px; height: 30px; background: #f1f5fb; box-shadow: 0 0 0 .7px #c9d9ee; padding: 5px 6px; font-size: 4.600px; line-height: 7px; color: #2a4a80; }
.pn-foot { padding: 16.500px 0 0 4px; line-height: 6px; }
.scrollbar { position: absolute; left: 30px; top: 114px; width: 153px; height: 12px; border-radius: 4px; background: #8c8c8c; }

/* Connectors and nodes */
.wires { position: absolute; left: 0; top: 0; pointer-events: none; }
.node { position: absolute; width: 35.500px; height: 35.500px; background: #c4e3fe; border-radius: 3px; display: flex; align-items: center; justify-content: center; }
.node svg { width: 21px; height: 21px; }
.n-a { left: 407.500px; top: 44px; border-radius: 3px 0 0 3px; }
.n-b { left: 671px; top: 44px; border-radius: 3px 0 0 3px; }
.n-c { left: 934.500px; top: 44px; border-radius: 3px 0 0 3px; }
.n-link { left: 1144px; top: 43.500px; }
.n-x1 { left: 768px; top: 354px; }
.n-x2 { left: 931px; top: 864px; }
.n-x3 { left: 932px; top: 1237px; }
.n-x4 { left: 1039.500px; top: 1189px; }
.flowtag { position: absolute; top: 497px; height: 36px; background: #c4e3fe; border-radius: 6px 0 0 6px; display: flex; align-items: center; justify-content: space-between; font-size: 16.600px; font-weight: 500; color: #1e1e1e; white-space: nowrap; }
.flowtag svg { width: 22px; height: 22px; flex: none; }
.f-pick { left: 37px; width: 179px; padding: 0 6px 0 12px; }
.f-8 { left: 1138px; width: 105px; padding: 0 7px 0 12px; }

/* Toolbar */
.toolbar { position: absolute; left: 419.500px; top: 1298px; width: 711.500px; height: 71px; background: #fff; border-radius: 20px; display: flex; align-items: center; box-shadow: 0 1px 3px rgba(0,0,0,.08); }
.tools { width: 551px; height: 100%; display: flex; align-items: center; padding-left: 12.500px; border-right: 1px solid #e8e8e8; }
.tool { width: 47px; height: 47px; display: flex; align-items: center; justify-content: center; flex: none; }
.tool svg { width: 32px; height: 32px; }
.tool + .tool { margin-left: 14px; }
.tool.move { background: #4597f7; border-radius: 8px; }
.mini { width: 13px; height: 13px; flex: none; margin: 0 17.500px 0 6.500px; }
.modes { margin-left: 12px; width: 136px; height: 47px; background: #f5f5f5; border-radius: 10px; display: flex; align-items: center; justify-content: center; }
.mode { width: 41px; height: 41px; margin: 0 2px; display: flex; align-items: center; justify-content: center; border-radius: 7px; }
.mode.active { background: #fff; box-shadow: 0 1px 2px rgba(0,0,0,.12); }
.mode svg { width: 24px; height: 24px; }
```
